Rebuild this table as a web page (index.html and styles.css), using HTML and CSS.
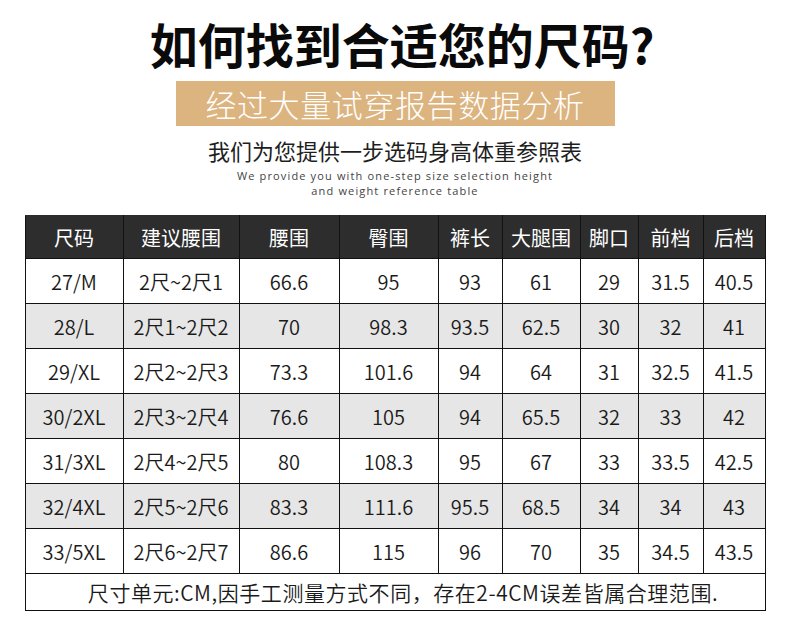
FILE: index.html
```html
<!DOCTYPE html>
<html lang="zh-CN">
<head>
<meta charset="utf-8">
<title>尺码参照表</title>
<link rel="stylesheet" href="styles.css">
</head>
<body>
<div class="page">
  <h1 class="title">如何找到合适您的尺码?</h1>
  <div class="banner">经过大量试穿报告数据分析</div>
  <p class="subtitle">我们为您提供一步选码身高体重参照表</p>
  <p class="english">We provide you with one-step size selection height<br>and weight reference table</p>
  <table class="sizes">
    <colgroup>
      <col class="c1"><col class="c2"><col class="c3"><col class="c4"><col class="c5"><col class="c6"><col class="c7"><col class="c8"><col class="c9">
    </colgroup>
    <thead>
      <tr><th>尺码</th><th>建议腰围</th><th>腰围</th><th>臀围</th><th>裤长</th><th>大腿围</th><th>脚口</th><th>前档</th><th>后档</th></tr>
    </thead>
    <tbody>
      <tr><td>27/M</td><td>2尺~2尺1</td><td>66.6</td><td>95</td><td>93</td><td>61</td><td>29</td><td>31.5</td><td>40.5</td></tr>
      <tr class="alt"><td>28/L</td><td>2尺1~2尺2</td><td>70</td><td>98.3</td><td>93.5</td><td>62.5</td><td>30</td><td>32</td><td>41</td></tr>
      <tr><td>29/XL</td><td>2尺2~2尺3</td><td>73.3</td><td>101.6</td><td>94</td><td>64</td><td>31</td><td>32.5</td><td>41.5</td></tr>
      <tr class="alt"><td>30/2XL</td><td>2尺3~2尺4</td><td>76.6</td><td>105</td><td>94</td><td>65.5</td><td>32</td><td>33</td><td>42</td></tr>
      <tr><td>31/3XL</td><td>2尺4~2尺5</td><td>80</td><td>108.3</td><td>95</td><td>67</td><td>33</td><td>33.5</td><td>42.5</td></tr>
      <tr class="alt"><td>32/4XL</td><td>2尺5~2尺6</td><td>83.3</td><td>111.6</td><td>95.5</td><td>68.5</td><td>34</td><td>34</td><td>43</td></tr>
      <tr><td>33/5XL</td><td>2尺6~2尺7</td><td>86.6</td><td>115</td><td>96</td><td>70</td><td>35</td><td>34.5</td><td>43.5</td></tr>
      <tr class="note"><td colspan="9">尺寸单元:CM,因手工测量方式不同，存在2-4CM误差皆属合理范围.</td></tr>
    </tbody>
  </table>
</div>
</body>
</html>
```
FILE: styles.css
```css
html, body {
  margin: 0;
  padding: 0;
  background: #fff;
}
body {
  font-family: "Noto Sans CJK SC", "Noto Sans", sans-serif;
  color: #1a1a1a;
}
.page {
  width: 790px;
  height: 626px;
  display: flex;
  flex-direction: column;
  align-items: center;
}
.title {
  margin: 14px 0 0 14px;
  font-size: 48px;
  line-height: 58px;
  height: 58px;
  font-weight: 700;
  letter-spacing: 0;
  color: #0a0a0a;
}
.banner {
  margin-top: 9px;
  width: 439px;
  height: 45px;
  background: #dcb47f;
  color: #fff;
  font-size: 31px;
  font-weight: 300;
  line-height: 45px;
  text-align: center;
  letter-spacing: 0.6px;
}
.subtitle {
  margin: 11px 0 0;
  font-size: 22px;
  line-height: 26px;
  color: #1e1e1e;
  letter-spacing: 0;
}
.english {
  margin: 5px 0 0;
  font-family: "Open Sans", "Noto Sans", sans-serif;
  font-size: 11px;
  line-height: 15px;
  letter-spacing: 1.15px;
  color: #444;
  text-align: center;
}
.sizes {
  margin-top: 17px;
  border-collapse: collapse;
  table-layout: fixed;
  width: 740px;
  font-size: 20px;
}
.c1 { width: 98px; }
.c2 { width: 116px; }
.c3 { width: 100px; }
.c4 { width: 99px; }
.c5 { width: 64px; }
.c6 { width: 78px; }
.c7 { width: 58px; }
.c8 { width: 65px; }
.c9 { width: 62px; }
.sizes th, .sizes td {
  border: 1.5px solid #111;
  text-align: center;
  padding: 0;
  white-space: nowrap;
}
.sizes th {
  background: #2d2d2d;
  color: #fff;
  font-weight: 400;
  height: 42px;
  border-top-color: #2d2d2d;
}
.sizes td {
  height: 44px;
  color: #1a1a1a;
  font-weight: 350;
}
.sizes tr.alt td {
  background: #e6e6e6;
}
.sizes tr.note td {
  height: 36px;
  font-size: 21px;
  letter-spacing: 0.55px;
  padding-left: 16px;
}
```
